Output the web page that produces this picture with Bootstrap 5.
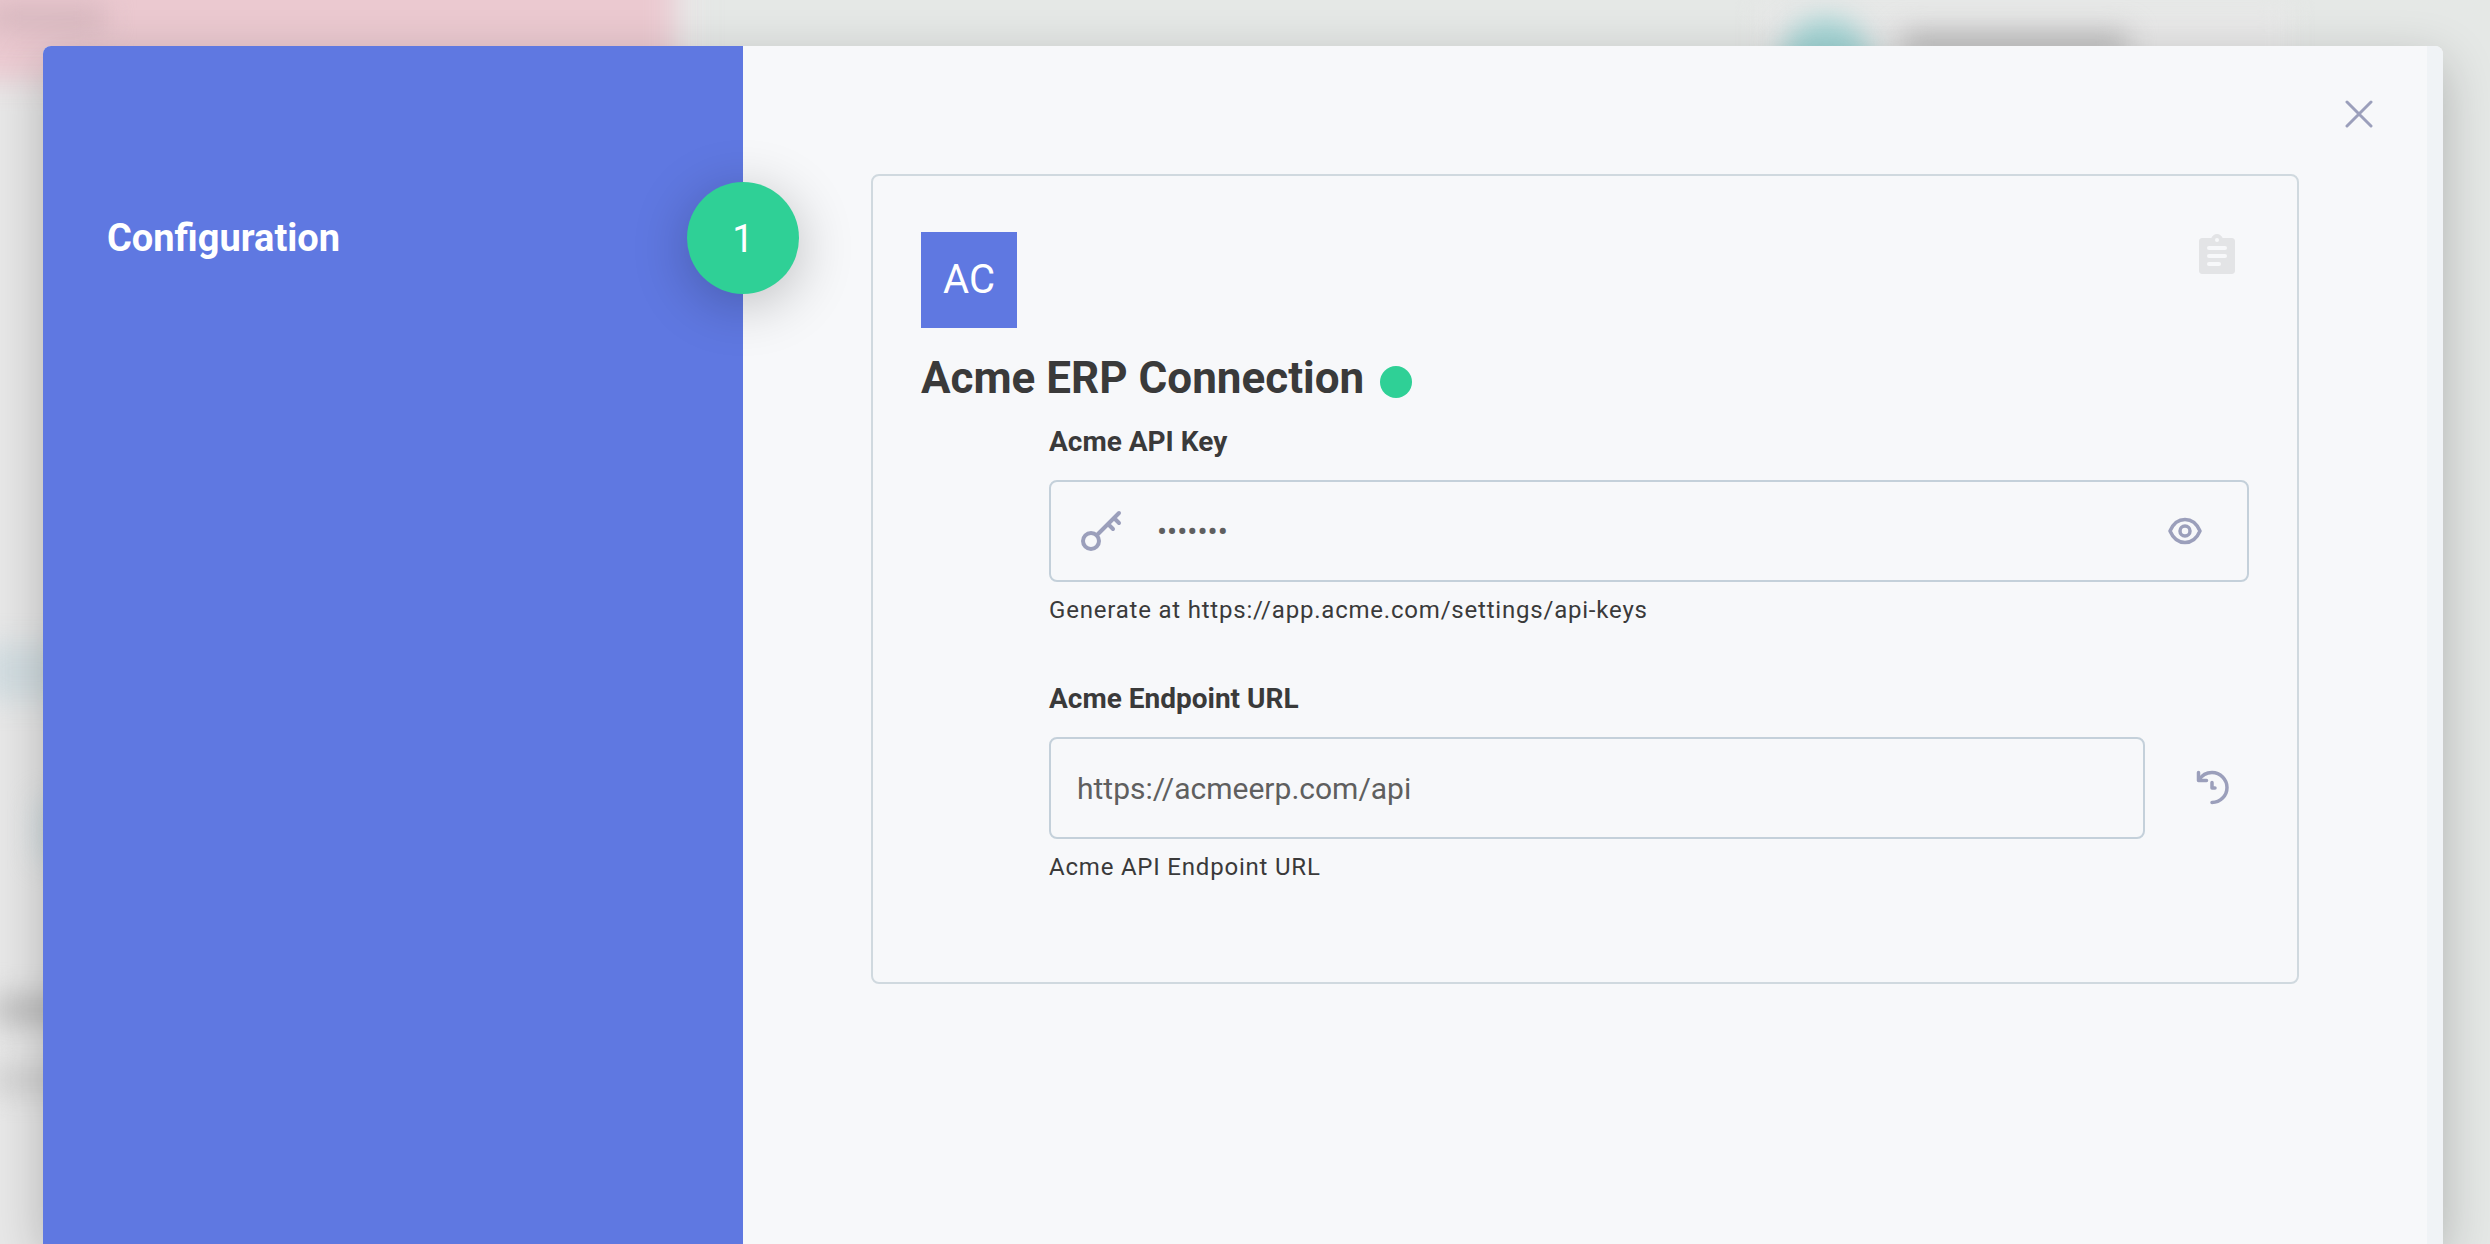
<!DOCTYPE html>
<html lang="en">
<head>
<meta charset="utf-8">
<meta name="viewport" content="width=device-width, initial-scale=1">
<title>Acme ERP Connection</title>
<link href="https://cdn.jsdelivr.net/npm/bootstrap@5.3.0/dist/css/bootstrap.min.css" rel="stylesheet">
<style>
  :root { --brand: #5f78e1; --ok: #2fd096; --ink: #3a3a3a; --icon: #9b9fbb; --line: #c4d0da; }
  body { font-family: Roboto, "Liberation Sans", sans-serif; color: var(--ink); background: #e5e8e6; }
  .stage { position: relative; min-height: 100vh; padding: 46px 47px 0 43px; overflow: hidden; }

  /* blurred page behind the dialog */
  .haze { position: absolute; inset: 0; }
  .haze i { position: absolute; filter: blur(14px); }
  .haze .panel-a { left: -40px; top: -40px; width: 740px; height: 1400px; background: #e8e8e8; }
  .haze .panel-b { left: 1760px; top: 4px; width: 530px; height: 200px; background: #e8e8e8; }
  .haze .rose { left: -40px; top: -40px; width: 714px; height: 120px; background: #ebc9d0; }
  .haze .rose-text { left: -10px; top: 6px; width: 116px; height: 24px; background: #d3b5bc; }
  .haze .teal { left: 1780px; top: 18px; width: 92px; height: 92px; border-radius: 50%; background: #9fd3d3; }
  .haze .name { left: 1902px; top: 32px; width: 226px; height: 26px; background: #b8b8b8; }
  .haze .mist { left: -20px; top: 644px; width: 90px; height: 56px; background: #d2dde1; }
  .haze .dot-a { left: 38px; top: 800px; width: 40px; height: 60px; background: #cfdce0; }
  .haze .row-a { left: -6px; top: 995px; width: 100px; height: 30px; background: #bebebe; }
  .haze .row-b { left: -10px; top: 1068px; width: 90px; height: 24px; background: #cfcfcf; }

  .dialog { position: relative; min-height: calc(100vh - 46px); border-radius: 8px 8px 0 0; background: #f7f8fa; box-shadow: 0 16px 52px rgba(0, 0, 0, .24); }
  .steps { flex: 0 0 700px; padding: 136px 0 0 64px; background: var(--brand); border-top-left-radius: 8px; }
  .step-name { font-size: 38px; line-height: 44px; font-weight: 700; color: #fff; }
  .step-num { width: 112px; height: 112px; margin-right: -56px; padding-top: 2px; background: var(--ok); color: #fff; font-size: 38px; line-height: 44px; box-shadow: 0 10px 56px rgba(0, 0, 0, .24); position: relative; z-index: 1; }
  .pane { min-width: 0; padding: 128px; }
  .rail { flex: 0 0 16px; background: #f0f3f6; border-top-right-radius: 8px; }
  .bare { border: 0; padding: 0; background: none; color: var(--icon); display: inline-flex; align-items: center; justify-content: center; }
  .close-x { position: absolute; top: 44px; right: 60px; width: 48px; height: 48px; }

  .conn { border: 2px solid #d0d9df; border-radius: 8px; padding: 56px 48px 44px; }
  .tile { width: 96px; height: 96px; background: var(--brand); color: #fff; font-size: 40px; line-height: 48px; }
  .clip { width: 64px; height: 48px; color: #e3e4e6; }
  .conn-title { font-size: 44px; line-height: 52px; font-weight: 700; margin: 24px 0 20px; gap: 16px; }
  .state { width: 32px; height: 32px; margin-top: 8px; background: var(--ok); }
  .fields { margin-left: 128px; }
  .field { margin-bottom: 55px; }
  .field label { display: block; font-size: 28px; line-height: 36px; font-weight: 700; margin-bottom: 20px; }
  .box { height: 102px; border: 2px solid var(--line); border-radius: 8px; padding: 0 38px 0 26px; }
  .box input { border: 0; background: none; outline: 0; padding: 2px 0 0; min-width: 0; color: #5f5f5f; font-size: 30px; line-height: 40px; }
  .box .key { margin: 0 34px 0 4px; color: var(--icon); }
  .hint { font-size: 24px; line-height: 32px; margin-top: 12px; letter-spacing: .033em; }
  .restore { width: 72px; height: 72px; }
</style>
</head>
<body>
<div class="stage">
  <div class="haze" aria-hidden="true">
    <i class="panel-a"></i><i class="panel-b"></i><i class="rose"></i><i class="rose-text"></i><i class="teal"></i><i class="name"></i>
    <i class="mist"></i><i class="dot-a"></i><i class="row-a"></i><i class="row-b"></i>
  </div>

  <div class="dialog d-flex" role="dialog" aria-label="Configuration">
    <nav class="steps">
      <div class="d-flex align-items-center justify-content-between">
        <span class="step-name">Configuration</span>
        <span class="step-num rounded-circle d-flex align-items-center justify-content-center">1</span>
      </div>
    </nav>

    <main class="pane flex-grow-1">
      <section class="conn">
        <div class="d-flex justify-content-between align-items-start">
          <div class="tile d-flex align-items-center justify-content-center">AC</div>
          <button type="button" class="bare clip" aria-label="Copy details">
            <svg width="48" height="48" viewBox="0 0 24 24" fill="currentColor"><path fill-rule="evenodd" d="M19.500 3H14.820C14.400 1.840 13.300 1 12 1S9.600 1.840 9.180 3H4.500C3.700 3 3 3.700 3 4.500V19.500C3 20.300 3.700 21 4.500 21H19.500C20.300 21 21 20.300 21 19.500V4.500C21 3.700 20.300 3 19.500 3ZM12 3A1 1 0 1 1 12 5A1 1 0 1 1 12 3ZM13 17H8A1 1 0 0 1 8 15H13A1 1 0 0 1 13 17ZM16 13H8A1 1 0 0 1 8 11H16A1 1 0 0 1 16 13ZM16 9H8A1 1 0 0 1 8 7H16A1 1 0 0 1 16 9Z"/></svg>
          </button>
        </div>

        <h1 class="conn-title d-flex align-items-center">Acme ERP Connection <span class="state rounded-circle" role="img" aria-label="Connected"></span></h1>

        <form class="fields">
          <div class="field">
            <label for="apiKey">Acme API Key</label>
            <div class="box d-flex align-items-center">
              <svg class="key flex-shrink-0" width="42" height="42" viewBox="0 0 42 42" fill="none" stroke="currentColor" stroke-width="4" stroke-linecap="round" stroke-linejoin="round"><circle cx="10" cy="31" r="8"/><path d="M16 25L38 3M33 8L38 13M27 14L32 19"/></svg>
              <input class="flex-grow-1" id="apiKey" type="password" value="abcdefg" autocomplete="off">
              <button type="button" class="bare" aria-label="Show key">
                <svg width="48" height="48" viewBox="0 0 48 48" fill="none" stroke="currentColor" stroke-width="3.500" stroke-linejoin="round"><path d="M9 24C12 17 17.500 12.500 24 12.500S36 17 39 24C36 31 30.500 35.500 24 35.500S12 31 9 24Z"/><circle cx="24" cy="24" r="5"/></svg>
              </button>
            </div>
            <div class="hint">Generate at https://app.acme.com/settings/api-keys</div>
          </div>

          <div class="field">
            <label for="endpoint">Acme Endpoint URL</label>
            <div class="d-flex align-items-center gap-2">
              <div class="box d-flex align-items-center flex-grow-1 me-4">
                <input class="flex-grow-1" id="endpoint" type="text" value="https://acmeerp.com/api">
              </div>
              <button type="button" class="bare restore" aria-label="Restore default">
                <svg width="36" height="36" viewBox="0 0 36 36" fill="none" stroke="currentColor" stroke-width="3.500" stroke-linecap="round" stroke-linejoin="round"><path d="M4 10C7 5 12 2.500 17 2.500A15 15 0 0 1 17 32.500"/><path d="M3.500 2.500V10.500H11.500"/><path d="M17 12.500V18H20"/></svg>
              </button>
            </div>
            <div class="hint">Acme API Endpoint URL</div>
          </div>
        </form>
      </section>
    </main>
    <div class="rail"></div>

    <button type="button" class="bare close-x" aria-label="Close">
      <svg width="28" height="28" viewBox="0 0 28 28" fill="none" stroke="currentColor" stroke-width="3" stroke-linecap="round"><path d="M2 2L26 26M26 2L2 26"/></svg>
    </button>
  </div>
</div>
<script src="https://cdn.jsdelivr.net/npm/bootstrap@5.3.0/dist/js/bootstrap.bundle.min.js"></script>
</body>
</html>
